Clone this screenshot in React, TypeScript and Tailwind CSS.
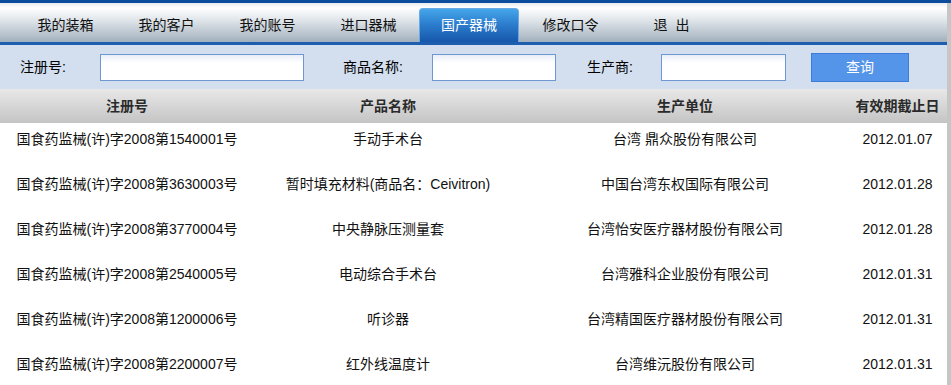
import React from "react";

const tabs = ["我的装箱", "我的客户", "我的账号", "进口器械", "国产器械", "修改口令", "退 出"];

const rows = [
  ["国食药监械(许)字2008第1540001号", "手动手术台", "台湾 鼎众股份有限公司", "2012.01.07"],
  ["国食药监械(许)字2008第3630003号", "暂时填充材料(商品名：Ceivitron)", "中国台湾东权国际有限公司", "2012.01.28"],
  ["国食药监械(许)字2008第3770004号", "中央静脉压测量套", "台湾怡安医疗器材股份有限公司", "2012.01.28"],
  ["国食药监械(许)字2008第2540005号", "电动综合手术台", "台湾雅科企业股份有限公司", "2012.01.31"],
  ["国食药监械(许)字2008第1200006号", "听诊器", "台湾精国医疗器材股份有限公司", "2012.01.31"],
  ["国食药监械(许)字2008第2200007号", "红外线温度计", "台湾维沅股份有限公司", "2012.01.31"],
];

function Input({ w }: { w: string }) {
  return (
    <div
      className={`${w} h-[27px] border border-[#6f98d3] bg-[linear-gradient(to_bottom,#e9eef6_0px,#ffffff_8px)]`}
    />
  );
}

export default function App() {
  return (
    <div
      className="w-[951px] h-[385px] overflow-hidden bg-white text-[14px] text-black"
      style={{ fontFamily: '"Liberation Sans", "Noto Sans CJK SC", sans-serif' }}
    >
      <div className="h-[3px] bg-[#0b4c9c]" />
      <div className="flex h-[382px] overflow-hidden">
        <div className="flex-1 flex flex-col">
          {/* Tab bar */}
          <div className="h-[39px] shrink-0 flex items-end pl-[15px] bg-[linear-gradient(to_bottom,#e8ecf0_0px,#ffffff_5px,#dde3e8_18px,#a2b0bd_39px)]">
            {tabs.map((t, i) =>
              i === 4 ? (
                <div
                  key={t}
                  className="w-[100px] mr-[1px] h-[34px] rounded-t-[4px] border border-b-0 border-[#6aa8e6] bg-[linear-gradient(to_bottom,#45a6ea,#2a7acb_50%,#1657ab)] text-white flex items-center justify-center"
                >
                  {t}
                </div>
              ) : (
                <div
                  key={t}
                  className="w-[101px] h-[34px] flex items-center justify-center text-[#111] whitespace-pre"
                >
                  {t === "退 出" ? "退  出" : t}
                </div>
              )
            )}
          </div>
          <div className="h-[3px] shrink-0 bg-[#1d5eae]" />
          {/* Search bar */}
          <div className="h-[44px] shrink-0 bg-[#d3deee] flex items-center pl-[20px]">
            <span className="w-[80px]">注册号:</span>
            <Input w="w-[204px]" />
            <span className="ml-[39px] w-[89px]">商品名称:</span>
            <Input w="w-[124px]" />
            <span className="ml-[31px] w-[74px]">生产商:</span>
            <Input w="w-[125px]" />
            <button className="ml-[25px] w-[98px] h-[29px] bg-[#5595e9] border border-[#3d7cd8] text-white">
              查询
            </button>
          </div>
          {/* Table header */}
          <div className="h-[34px] shrink-0 grid grid-cols-[254px_268px_326px_99px] items-center font-bold text-[#2a2a2a] bg-[linear-gradient(to_bottom,#e8e8e8,#d6d6d6_50%,#c4c4c4)]">
            <div className="text-center">注册号</div>
            <div className="text-center">产品名称</div>
            <div className="text-center">生产单位</div>
            <div className="text-center whitespace-nowrap">有效期截止日</div>
          </div>
          {/* Rows */}
          {rows.map((r, i) => (
            <div
              key={i}
              className="h-[45px] shrink-0 grid grid-cols-[254px_268px_326px_99px] pt-[6px] leading-[20px] text-[#111]"
            >
              <div className="text-center whitespace-nowrap">{r[0]}</div>
              <div className="text-center whitespace-nowrap">{r[1]}</div>
              <div className="text-center whitespace-nowrap">{r[2]}</div>
              <div className="text-center whitespace-nowrap">{r[3]}</div>
            </div>
          ))}
        </div>
        <div className="w-[4px] shrink-0 bg-[#c6c6c6]" />
      </div>
    </div>
  );
}
